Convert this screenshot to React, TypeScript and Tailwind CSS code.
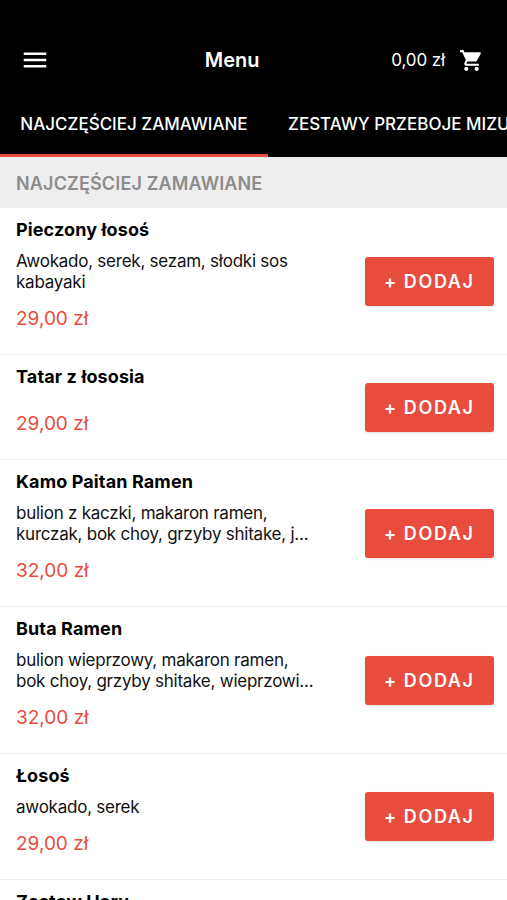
import { MdMenu, MdShoppingCart } from 'react-icons/md';

type Dish = {
  name: string;
  lines: string[];
  price: string;
  height: string;
};

const dishes: Dish[] = [
  { name: 'Pieczony łosoś', lines: ['Awokado, serek, sezam, słodki sos', 'kabayaki'], price: '29,00 zł', height: 'h-[147px]' },
  { name: 'Tatar z łososia', lines: [], price: '29,00 zł', height: 'h-[105px]' },
  { name: 'Kamo Paitan Ramen', lines: ['bulion z kaczki, makaron ramen,', 'kurczak, bok choy, grzyby shitake, j...'], price: '32,00 zł', height: 'h-[147px]' },
  { name: 'Buta Ramen', lines: ['bulion wieprzowy, makaron ramen,', 'bok choy, grzyby shitake, wieprzowi...'], price: '32,00 zł', height: 'h-[147px]' },
  { name: 'Łosoś', lines: ['awokado, serek'], price: '29,00 zł', height: 'h-[126px]' },
  { name: 'Zestaw Haru', lines: [], price: '29,00 zł', height: 'h-[105px]' },
];

function Header() {
  return (
    <header className="bg-black text-white">
      <div className="flex h-[92px] items-start justify-between pl-[20px] pr-[23px] pt-[45px]">
        <MdMenu className="size-[30px]" />
        <h1 className="pl-[23px] text-center text-[20px] font-semibold leading-[30px]">Menu</h1>
        <div className="flex h-[30px] items-center gap-[14px]">
          <span className="text-[17px] leading-[30px] tracking-[-0.1px]">0,00 zł</span>
          <MdShoppingCart className="size-[25px]" />
        </div>
      </div>
      <nav className="flex h-[65px] overflow-hidden whitespace-nowrap text-[17px] font-medium">
        <span className="flex w-[268px] shrink-0 items-center justify-center border-b-[3px] border-[#e74c3c] pt-[3px]">
          NAJCZĘŚCIEJ ZAMAWIANE
        </span>
        <span className="flex shrink-0 items-center pl-5">ZESTAWY PRZEBOJE MIZU</span>
      </nav>
    </header>
  );
}

function DishRow({ dish }: { dish: Dish }) {
  return (
    <li className={`flex shrink-0 items-center justify-between border-b border-[#eeeeee] pl-4 pr-[13px] ${dish.height}`}>
      <div className="flex h-full flex-col whitespace-nowrap pt-[10px]">
        <h3 className="text-[18px] font-bold leading-6 tracking-[0.12px]">{dish.name}</h3>
        <div className="mt-[9px] text-[17px] leading-[21px] tracking-[-0.24px] text-[#111111]">
          {dish.lines.map((line) => (
            <p key={line}>{line}</p>
          ))}
        </div>
        <p className="mt-[14px] text-[19px] leading-6 text-[#e74c3c]">{dish.price}</p>
      </div>
      <button className="h-[49px] w-[129.5px] shrink-0 rounded-[3px] bg-[#e74c3c] text-[18px] font-semibold tracking-[1.6px] text-white shadow">
        + DODAJ
      </button>
    </li>
  );
}

export default function App() {
  return (
    <div className="flex h-[900px] w-[507px] flex-col overflow-hidden bg-white font-['Inter',sans-serif] text-black">
      <Header />
      <h2 className="h-[51px] shrink-0 bg-[#eeeeee] px-4 text-[18px] font-semibold leading-[53px] tracking-[0.15px] text-[#8c8c8c]">
        NAJCZĘŚCIEJ ZAMAWIANE
      </h2>
      <ul>
        {dishes.map((dish) => (
          <DishRow key={dish.name} dish={dish} />
        ))}
      </ul>
    </div>
  );
}
